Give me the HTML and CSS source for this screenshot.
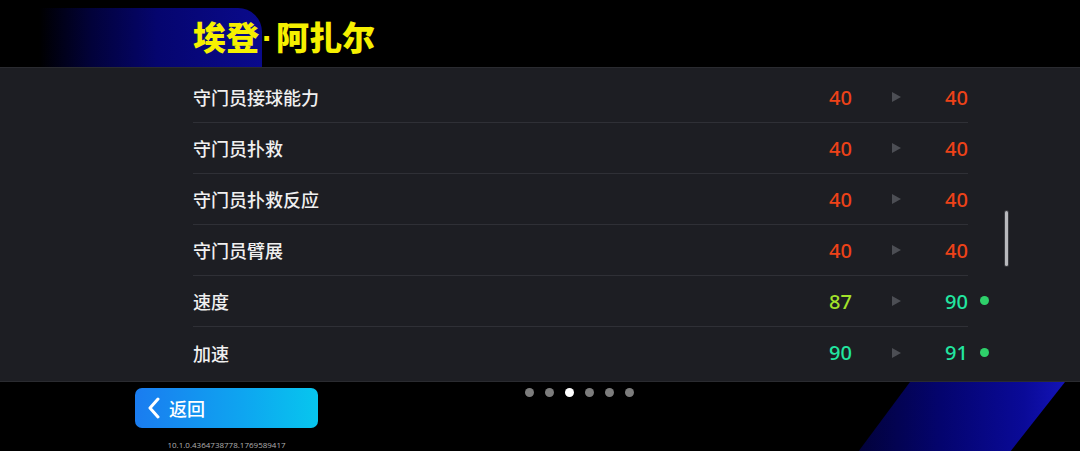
FILE: index.html
```html
<!DOCTYPE html>
<html lang="zh">
<head>
<meta charset="utf-8">
<link rel="stylesheet" href="styles.css">
</head>
<body>
<div class="screen">
  <header class="header">
    <h1 class="title">埃登<span class="sep">·</span>阿扎尔</h1>
  </header>
  <main class="panel">
    <div class="list">
      <div class="row"><span class="label">守门员接球能力</span><span class="val red">40</span><span class="arrow"></span><span class="val red">40</span></div>
      <div class="row"><span class="label">守门员扑救</span><span class="val red">40</span><span class="arrow"></span><span class="val red">40</span></div>
      <div class="row"><span class="label">守门员扑救反应</span><span class="val red">40</span><span class="arrow"></span><span class="val red">40</span></div>
      <div class="row"><span class="label">守门员臂展</span><span class="val red">40</span><span class="arrow"></span><span class="val red">40</span></div>
      <div class="row"><span class="label">速度</span><span class="val lime">87</span><span class="arrow"></span><span class="val teal">90</span><span class="dot"></span></div>
      <div class="row last"><span class="label">加速</span><span class="val teal">90</span><span class="arrow"></span><span class="val teal">91</span><span class="dot"></span></div>
    </div>
    <div class="scrollbar"></div>
  </main>
  <footer class="footer">
    <div class="left">
      <button class="back">
        <svg class="chev" width="14" height="22" viewBox="0 0 14 22"><path d="M11 2 L3 11 L11 20" fill="none" stroke="#fff" stroke-width="3" stroke-linecap="round" stroke-linejoin="round"/></svg>
        <span>返回</span>
      </button>
      <div class="version">10.1.0.4364738778.1769589417</div>
    </div>
    <div class="dots">
      <span class="pd"></span><span class="pd"></span><span class="pd on"></span><span class="pd"></span><span class="pd"></span><span class="pd"></span>
    </div>
    <div class="stripe"></div>
  </footer>
</div>
</body>
</html>
```
FILE: styles.css
```css
html, body {
  margin: 0;
  padding: 0;
  background: #000;
}
.screen {
  width: 1080px;
  height: 451px;
  overflow: hidden;
  background: #000;
  font-family: "Noto Sans CJK SC", "Noto Sans", sans-serif;
  color: #f2f2f2;
}
.header {
  position: relative;
  height: 67px;
  box-sizing: border-box;
  padding-left: 193px;
  display: flex;
  align-items: center;
}
.header::before {
  content: "";
  position: absolute;
  left: 0;
  top: 8px;
  width: 262px;
  height: 59px;
  border-radius: 0 24px 0 0;
  background: linear-gradient(90deg, #000 0%, #000 15%, #02023a 35%, #05056e 60%, #0a0a8c 100%);
}
.title {
  position: relative;
  margin: 8px 0 0 0;
  font-size: 33px;
  font-weight: 900;
  color: #f6f000;
  line-height: 1;
}
.sep {
  font-family: "Liberation Sans", sans-serif;
  font-weight: 700;
  margin: 0 3px;
}
.panel {
  position: relative;
  height: 314px;
  box-sizing: border-box;
  background: #1d1e23;
  border-top: 1px solid #2a2b30;
  padding: 4px 0 0 193px;
}
.list {
  width: 775px;
}
.row {
  position: relative;
  display: grid;
  grid-template-columns: 1fr 60px 88px 28px;
  align-items: center;
  height: 51px;
  box-sizing: border-box;
  border-bottom: 1px solid #2f3036;
}
.row.last {
  border-bottom: none;
}
.label {
  font-size: 18px;
  font-weight: 500;
  color: #f0f0f0;
}
.val {
  font-family: "Noto Sans", "Open Sans", sans-serif;
  font-size: 20px;
  font-weight: 500;
  text-align: right;
}
.red { color: #ee4218; }
.lime { color: #a3e22a; }
.teal { color: #22e6a0; }
.arrow {
  justify-self: center;
  width: 0;
  height: 0;
  border-top: 5px solid transparent;
  border-bottom: 5px solid transparent;
  border-left: 9px solid #4c4e54;
}
.dot {
  position: absolute;
  right: -21px;
  top: 50%;
  margin-top: -5px;
  width: 9px;
  height: 9px;
  border-radius: 50%;
  background: #2ed06a;
}
.scrollbar {
  position: absolute;
  left: 1005px;
  top: 143px;
  width: 3px;
  height: 55px;
  border-radius: 2px;
  background: #b8b9bd;
  box-shadow: 0 0 0 1px #3a3b40;
}
.footer {
  position: relative;
  height: 70px;
  display: flex;
  padding-left: 135px;
  border-top: 1px solid #2a2b30;
  box-sizing: border-box;
}
.left {
  position: relative;
  z-index: 1;
  width: 183px;
  display: flex;
  flex-direction: column;
  align-items: center;
  padding-top: 6px;
}
.back {
  width: 183px;
  height: 40px;
  border: none;
  border-radius: 7px;
  background: linear-gradient(90deg, #1a7cf0 0%, #0ea6f0 60%, #07c6ee 100%);
  display: flex;
  align-items: center;
  padding: 0 0 0 12px;
  gap: 8px;
  color: #fff;
  font-family: "Noto Sans CJK SC", sans-serif;
  font-size: 18px;
  font-weight: 500;
}
.chev {
  display: block;
}
.version {
  margin-top: 12px;
  font-family: "Open Sans", "Noto Sans", sans-serif;
  font-size: 8px;
  color: #b0b0b0;
  line-height: 10px;
}
.dots {
  position: relative;
  z-index: 1;
  display: flex;
  gap: 11px;
  margin-left: 207px;
  padding-top: 6px;
  height: 9px;
}
.pd {
  width: 9px;
  height: 9px;
  border-radius: 50%;
  background: #7c7c7c;
}
.pd.on {
  background: #ffffff;
}
.stripe {
  position: absolute;
  left: 858px;
  top: 0;
  width: 208px;
  height: 70px;
  clip-path: polygon(52px 0, 207px 0, 152px 70px, 0 70px);
  background: linear-gradient(90deg, #02023a 0%, #04046e 40%, #0a0a98 80%, #1414b8 100%);
}
```
